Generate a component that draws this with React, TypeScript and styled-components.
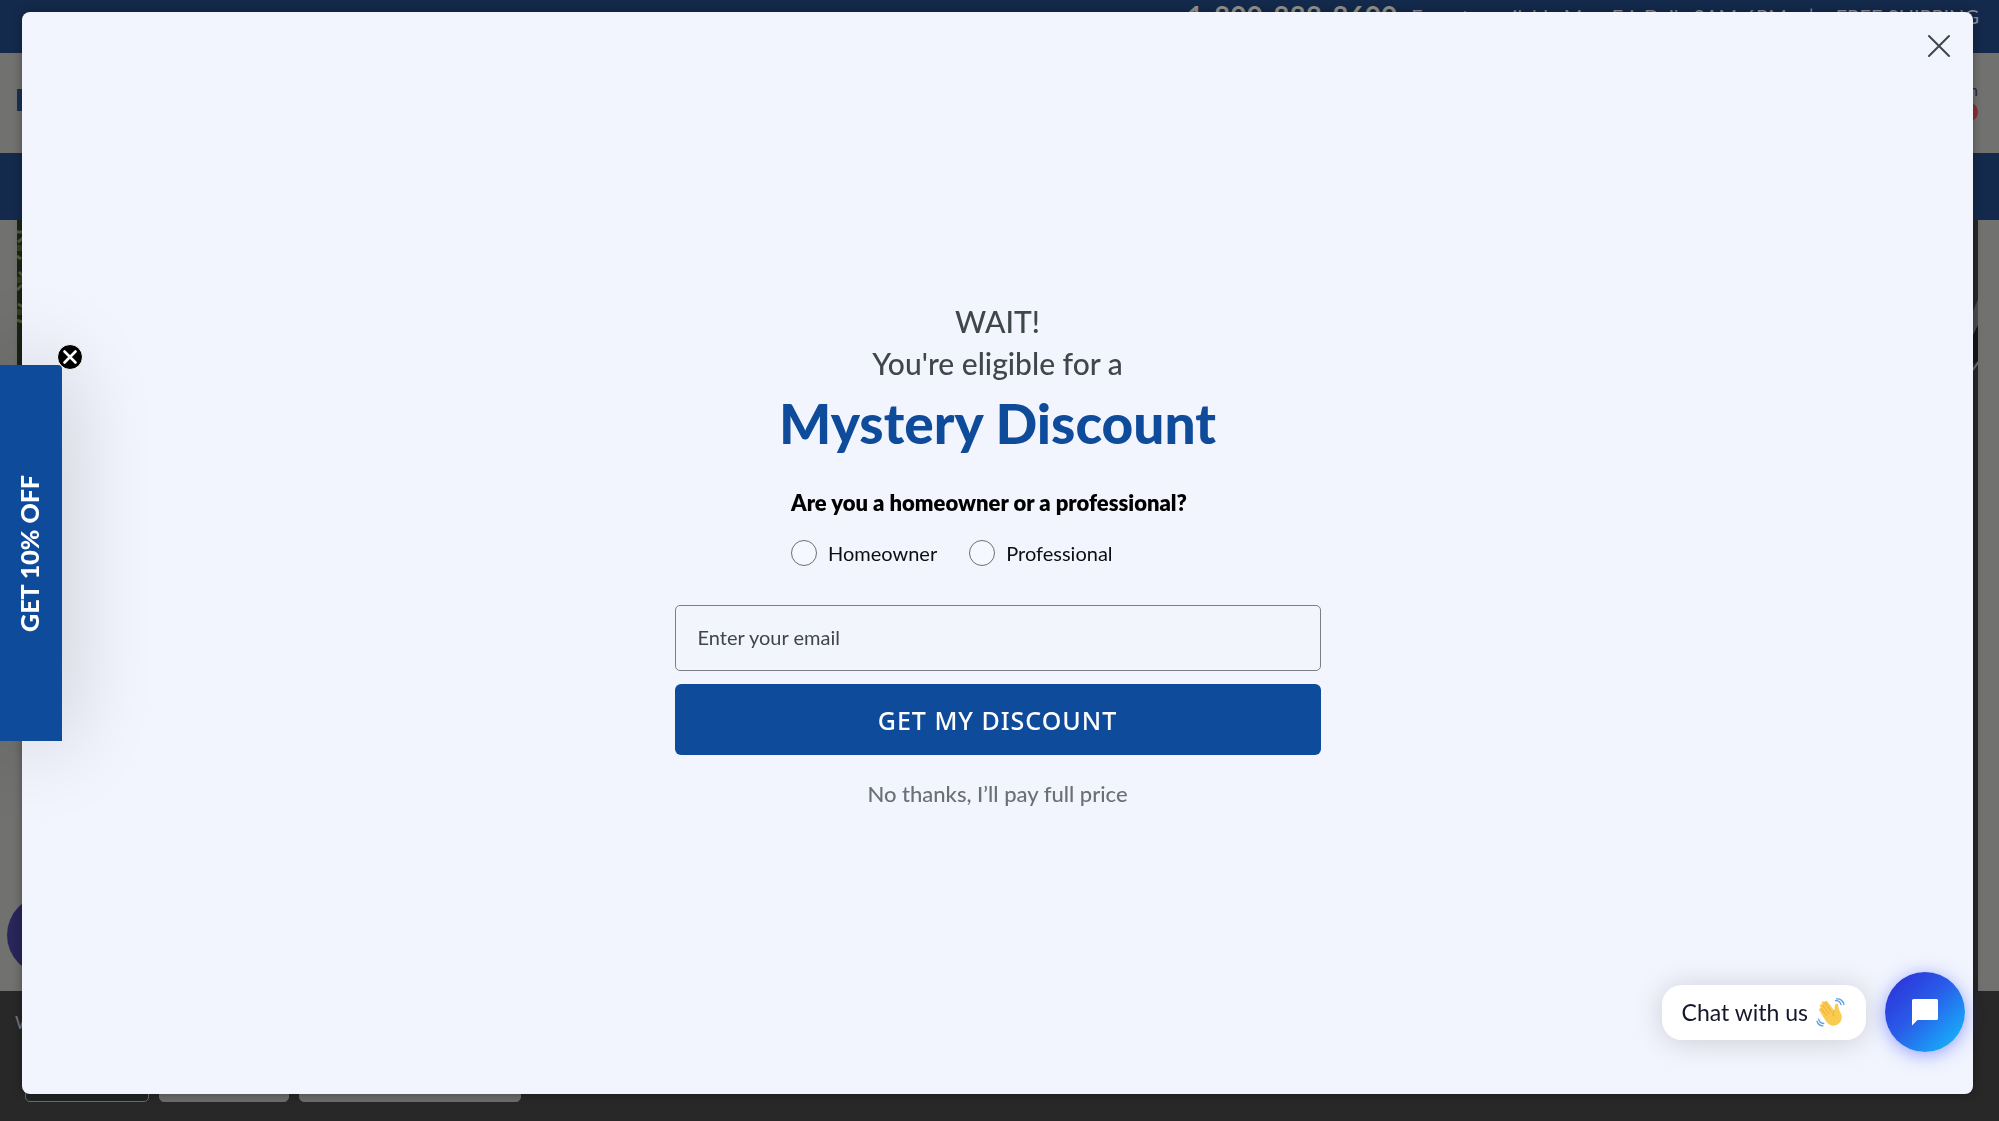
import React, { useState } from "react";
import styled, { createGlobalStyle } from "styled-components";

const GlobalStyle = createGlobalStyle`
  *, *::before, *::after { box-sizing: border-box; }
  html, body, #root { height: 100%; }
  body {
    margin: 0;
    overflow: hidden;
    background: #717170;
    font-family: Lato, "Open Sans", sans-serif;
  }
  button, input { font-family: inherit; }
`;

/* ---------- dimmed shop page ---------- */

const Page = styled.div`
  display: flex;
  flex-direction: column;
  height: 100vh;
  overflow: hidden;
`;

const TopBar = styled.div`
  display: flex;
  flex: none;
  align-items: flex-start;
  justify-content: flex-end;
  gap: 14px;
  height: 53px;
  padding: 2px 20px 0 0;
  background: #142a4c;
  color: #8d919a;
  font-size: 20px;
  line-height: 28px;
  white-space: nowrap;
`;

const Notices = styled.div`
  display: flex;
  gap: 22px;
`;

const Phone = styled.a`
  color: #96948a;
  font-size: 28px;
  font-weight: 700;
  text-decoration: none;
`;

const Header = styled.header`
  display: flex;
  flex: none;
  align-items: flex-start;
  justify-content: space-between;
  height: 100px;
  padding: 29px 21px 0 17px;
  background: #717170;
`;

const LogoMark = styled.div`
  width: 80px;
  height: 22px;
  margin-top: 7px;
  background: #1a3154;
`;

const Cart = styled.div`
  display: flex;
  flex-direction: column;
  gap: 4px;
  align-items: flex-end;
  color: #26282c;
  font-size: 16px;
  line-height: 16px;
`;

const CartBadge = styled.span`
  width: 20px;
  height: 20px;
  border-radius: 50%;
  background: #8e2c33;
`;

const Nav = styled.nav`
  flex: none;
  height: 67px;
  background: #142a4c;
`;

const Hero = styled.main`
  display: flex;
  flex: 1;
  justify-content: space-between;
  min-height: 0;
  padding: 0 21px 0 17px;
`;

const Hedge = styled.svg`
  display: block;
  width: 50%;
  height: 380px;
  background: #1d2615;
`;

const DarkPhoto = styled.svg`
  display: block;
  width: 50%;
  height: 100%;
  background: #272727;
`;

const CookieBar = styled.footer`
  display: flex;
  flex: none;
  flex-direction: column;
  justify-content: space-between;
  height: 130px;
  padding: 20px 15px 19px;
  background: #282828;
  color: #777777;
  font-size: 18px;
  line-height: 22px;
`;

const CookieActions = styled.div`
  display: flex;
  gap: 10px;
  padding-left: 10px;
`;

const CookieButton = styled.button<{ $width: number; $outline?: boolean }>`
  width: ${(p) => p.$width}px;
  height: 44px;
  border: 1px solid #6c6c6c;
  border-radius: 5px;
  background: ${(p) => (p.$outline ? "#202423" : "#6a6c6b")};
  color: ${(p) => (p.$outline ? "#777777" : "#222222")};
  font-size: 16px;
`;

const AccessibilityDot = styled.div`
  position: fixed;
  bottom: 146px;
  left: 7px;
  width: 80px;
  height: 80px;
  border-radius: 50%;
  background: #28265a;
`;

/* ---------- discount dialog ---------- */

const Overlay = styled.div`
  position: fixed;
  inset: 0;
  display: flex;
  padding: 12px 26px 27px 22px;
`;

const Dialog = styled.section`
  display: flex;
  flex: 1;
  flex-direction: column;
  align-items: center;
  justify-content: center;
  border-radius: 8px;
  background: #f2f5fd;
  box-shadow: 0 0 10px rgba(0, 0, 0, 0.35);
`;

const CloseButton = styled.button`
  position: absolute;
  top: 30px;
  right: 44px;
  display: flex;
  padding: 4px;
  border: 0;
  background: transparent;
  color: #3d474b;
  cursor: pointer;
`;

const OfferForm = styled.form`
  display: flex;
  flex-direction: column;
  align-items: center;
  width: 100%;
  max-width: 646px;
`;

const Lead = styled.p`
  margin: 0;
  color: #40474b;
  font-size: 30px;
  font-weight: 500;
  line-height: 42px;
  text-align: center;
`;

const Title = styled.h1`
  margin: 0;
  color: #0f4b9b;
  font-size: 55px;
  font-weight: 900;
  line-height: 78px;
  text-align: center;
`;

const Question = styled.fieldset`
  display: flex;
  flex-wrap: wrap;
  gap: 32px;
  width: 100%;
  max-width: 413px;
  margin: 29px 0 39px;
  padding: 0;
  border: 0;
`;

const Legend = styled.legend`
  margin-bottom: 25px;
  padding: 0;
  color: #000000;
  font-size: 22px;
  font-weight: 800;
  line-height: 24px;
  white-space: nowrap;
`;

const Choice = styled.label`
  display: flex;
  align-items: center;
  gap: 11px;
  color: #0c0e10;
  font-size: 20px;
  line-height: 26px;
`;

const Radio = styled.input`
  appearance: none;
  width: 26px;
  height: 26px;
  margin: 0;
  border: 1px solid #6b7074;
  border-radius: 50%;
  background: #f5f8ff;

  &:checked {
    border: 8px solid #0f4b9b;
  }
`;

const EmailInput = styled.input`
  width: 100%;
  height: 66px;
  margin-bottom: 13px;
  padding: 0 22px 2px;
  border: 1px solid #7c8083;
  border-radius: 5px;
  background: #f2f6fc;
  color: #3f464b;
  font-size: 20px;

  &::placeholder {
    color: #3f464b;
    opacity: 1;
  }
`;

const SubmitButton = styled.button`
  width: 100%;
  height: 71px;
  margin-bottom: 27px;
  border: 0;
  border-radius: 6px;
  background: #0f4b9b;
  color: #ffffff;
  font-family: "Noto Sans", "Open Sans", sans-serif;
  font-size: 25px;
  font-weight: 500;
  letter-spacing: 1px;
  cursor: pointer;
`;

const DeclineButton = styled.button`
  padding: 0;
  border: 0;
  background: transparent;
  color: #6a7074;
  font-size: 22px;
  font-weight: 500;
  line-height: 24px;
  cursor: pointer;
`;

/* ---------- side teaser ---------- */

const Teaser = styled.aside`
  position: fixed;
  top: 365px;
  left: 0;
  display: flex;
`;

const TeaserTab = styled.button`
  display: flex;
  align-items: center;
  justify-content: center;
  width: 62px;
  height: 376px;
  padding: 0 4px 0 0;
  border: 0;
  border-radius: 0 4px 0 0;
  background: #0f4b9b;
  box-shadow: 0 0 90px rgba(0, 0, 0, 0.2);
  color: #ffffff;
  cursor: pointer;
`;

const TeaserText = styled.span`
  font-size: 25px;
  font-weight: 900;
  line-height: 30px;
  white-space: nowrap;
  writing-mode: vertical-rl;
  transform: rotate(180deg);
`;

const TeaserClose = styled.button`
  position: absolute;
  top: -21px;
  left: 57px;
  display: flex;
  padding: 0;
  border: 0;
  border-radius: 50%;
  background: transparent;
  cursor: pointer;
`;

/* ---------- chat launcher ---------- */

const Chat = styled.div`
  position: fixed;
  right: 34px;
  bottom: 69px;
  display: flex;
  align-items: center;
  gap: 19px;
`;

const ChatBubble = styled.button`
  display: flex;
  align-items: center;
  gap: 8px;
  height: 55px;
  padding: 0 21px 0 20px;
  border: 0;
  border-radius: 20px;
  background: #ffffff;
  box-shadow: 0 2px 30px rgba(0, 0, 0, 0.16);
  color: #14162b;
  font-size: 23px;
  cursor: pointer;
`;

const ChatLauncher = styled.button`
  display: flex;
  align-items: center;
  justify-content: center;
  width: 80px;
  height: 80px;
  padding: 0;
  border: 0;
  border-radius: 50%;
  background: linear-gradient(135deg, #2c35da 10%, #2a5be8 45%, #15b4fb 92%);
  box-shadow: 0 3px 18px rgba(60, 80, 255, 0.5);
  cursor: pointer;
`;

const WavingHand = () => (
  <svg width="29" height="29" viewBox="0 0 29 29" aria-hidden="true">
    <path
      d="M3.2 12.2c-.9-1.4.9-2.8 2-1.6L4 8.300c-.9-1.600 1.200-3 2.300-1.500L5.900 5.300C5 3.600 7.200 2.300 8.300 3.800l.5.700c-.6-1.600 1.500-2.600 2.500-1.200l6 8.300c.6.700 1.500.3 1.500-.7-.1-1.800-.3-4.400 1.200-5.200 1.100-.5 2 .2 2.100 1.400.2 2.400.6 4.400 2.400 7.600 2.300 4.200 1.400 8.800-2.300 11.400-4 2.700-8.500 1.800-11.700-2.200z"
      fill="#fbcb4f"
    />
    <path
      d="M5.200 10.600l5.300 6.900M6.300 6.800l6.500 8.700M8.800 4.500l6.300 8.700M18.400 12.600c-1.800 1.400-1.900 3.500-.9 5.200"
      fill="none"
      stroke="#e3a637"
      strokeWidth="0.8"
      strokeLinecap="round"
    />
    <path
      d="M19.500 2.700c2.400-.6 5 1.200 5.500 4M20.500.900c3.500-.5 6.700 1.900 7.400 5.600M2.700 21.200c.4 2.500 2.400 4.300 5.100 4.300M1 23.200c.8 2.800 3 4.500 6 4.600"
      fill="none"
      stroke="#5c9fe6"
      strokeWidth="1.300"
      strokeLinecap="round"
    />
  </svg>
);

export default function App() {
  const [role, setRole] = useState("");
  const [email, setEmail] = useState("");

  return (
    <>
      <GlobalStyle />
      <Page>
        <TopBar>
          <Phone href="#call">1-800-888-8600</Phone>
          <Notices>
            <span>Experts available Mon-Fri, Daily 9AM-6PM</span>
            <span>|</span>
            <span>FREE SHIPPING</span>
          </Notices>
        </TopBar>
        <Header>
          <LogoMark />
          <Cart>
            <span>Sign in</span>
            <CartBadge />
          </Cart>
        </Header>
        <Nav />
        <Hero>
          <Hedge viewBox="0 0 980 380" preserveAspectRatio="xMinYMin slice" aria-hidden="true">
            <path
              d="M0 12h6M1 22l5-4M0 36l4 3M2 52l4 4M0 70l5-5M1 84l5 3M0 100l6 2"
              stroke="#566039"
              strokeWidth="3"
            />
            <path d="M0 28h6M0 60h6M0 92h6" stroke="#34431f" strokeWidth="6" />
          </Hedge>
          <DarkPhoto viewBox="0 0 980 770" preserveAspectRatio="xMaxYMin slice" aria-hidden="true">
            <path d="M974 92l6-14v26l-6 12z" fill="#4b4b4b" />
            <path d="M974 116l6-12v36l-6 4z" fill="#151515" />
            <path d="M974 150l6-8" stroke="#6d6d6d" strokeWidth="2" />
          </DarkPhoto>
        </Hero>
        <CookieBar>
          <span>We use cookies</span>
          <CookieActions>
            <CookieButton $width={124} $outline>
              Settings
            </CookieButton>
            <CookieButton $width={130}>Decline</CookieButton>
            <CookieButton $width={222}>Accept all cookies</CookieButton>
          </CookieActions>
        </CookieBar>
        <AccessibilityDot />
      </Page>

      <Overlay>
        <Dialog role="dialog" aria-labelledby="offer-title">
          <CloseButton type="button" aria-label="Close dialog">
            <svg width="24" height="24" viewBox="0 0 24 24" aria-hidden="true">
              <path
                d="M2 2l20 20M22 2L2 22"
                stroke="currentColor"
                strokeWidth="2"
                strokeLinecap="round"
              />
            </svg>
          </CloseButton>
          <OfferForm onSubmit={(e) => e.preventDefault()}>
            <Lead>WAIT!</Lead>
            <Lead>You're eligible for a</Lead>
            <Title id="offer-title">Mystery Discount</Title>
            <Question>
              <Legend>Are you a homeowner or a professional?</Legend>
              {["Homeowner", "Professional"].map((name) => (
                <Choice key={name}>
                  <Radio
                    type="radio"
                    name="role"
                    value={name}
                    checked={role === name}
                    onChange={() => setRole(name)}
                  />
                  {name}
                </Choice>
              ))}
            </Question>
            <EmailInput
              type="email"
              aria-label="Enter your email"
              placeholder="Enter your email"
              value={email}
              onChange={(e) => setEmail(e.target.value)}
            />
            <SubmitButton type="submit">GET MY DISCOUNT</SubmitButton>
            <DeclineButton type="button">No thanks, I’ll pay full price</DeclineButton>
          </OfferForm>
        </Dialog>
      </Overlay>

      <Teaser>
        <TeaserTab type="button">
          <TeaserText>GET 10% OFF</TeaserText>
        </TeaserTab>
        <TeaserClose type="button" aria-label="Close teaser">
          <svg width="26" height="26" viewBox="0 0 26 26" aria-hidden="true">
            <circle cx="13" cy="13" r="12.500" fill="#000" stroke="#fff" />
            <path
              d="M7.500 7.500l11 11M18.500 7.500l-11 11"
              stroke="#fff"
              strokeWidth="2.600"
              strokeLinecap="round"
            />
          </svg>
        </TeaserClose>
      </Teaser>

      <Chat>
        <ChatBubble type="button">
          Chat with us
          <WavingHand />
        </ChatBubble>
        <ChatLauncher type="button" aria-label="Open chat">
          <svg width="28" height="28" viewBox="0 0 28 28" aria-hidden="true">
            <path
              d="M2.500 1h23A1.500 1.500 0 0 1 27 2.500v18a1.500 1.500 0 0 1-1.500 1.500H6.500L1 27.500v-25A1.500 1.500 0 0 1 2.500 1z"
              fill="#fff"
            />
          </svg>
        </ChatLauncher>
      </Chat>
    </>
  );
}
